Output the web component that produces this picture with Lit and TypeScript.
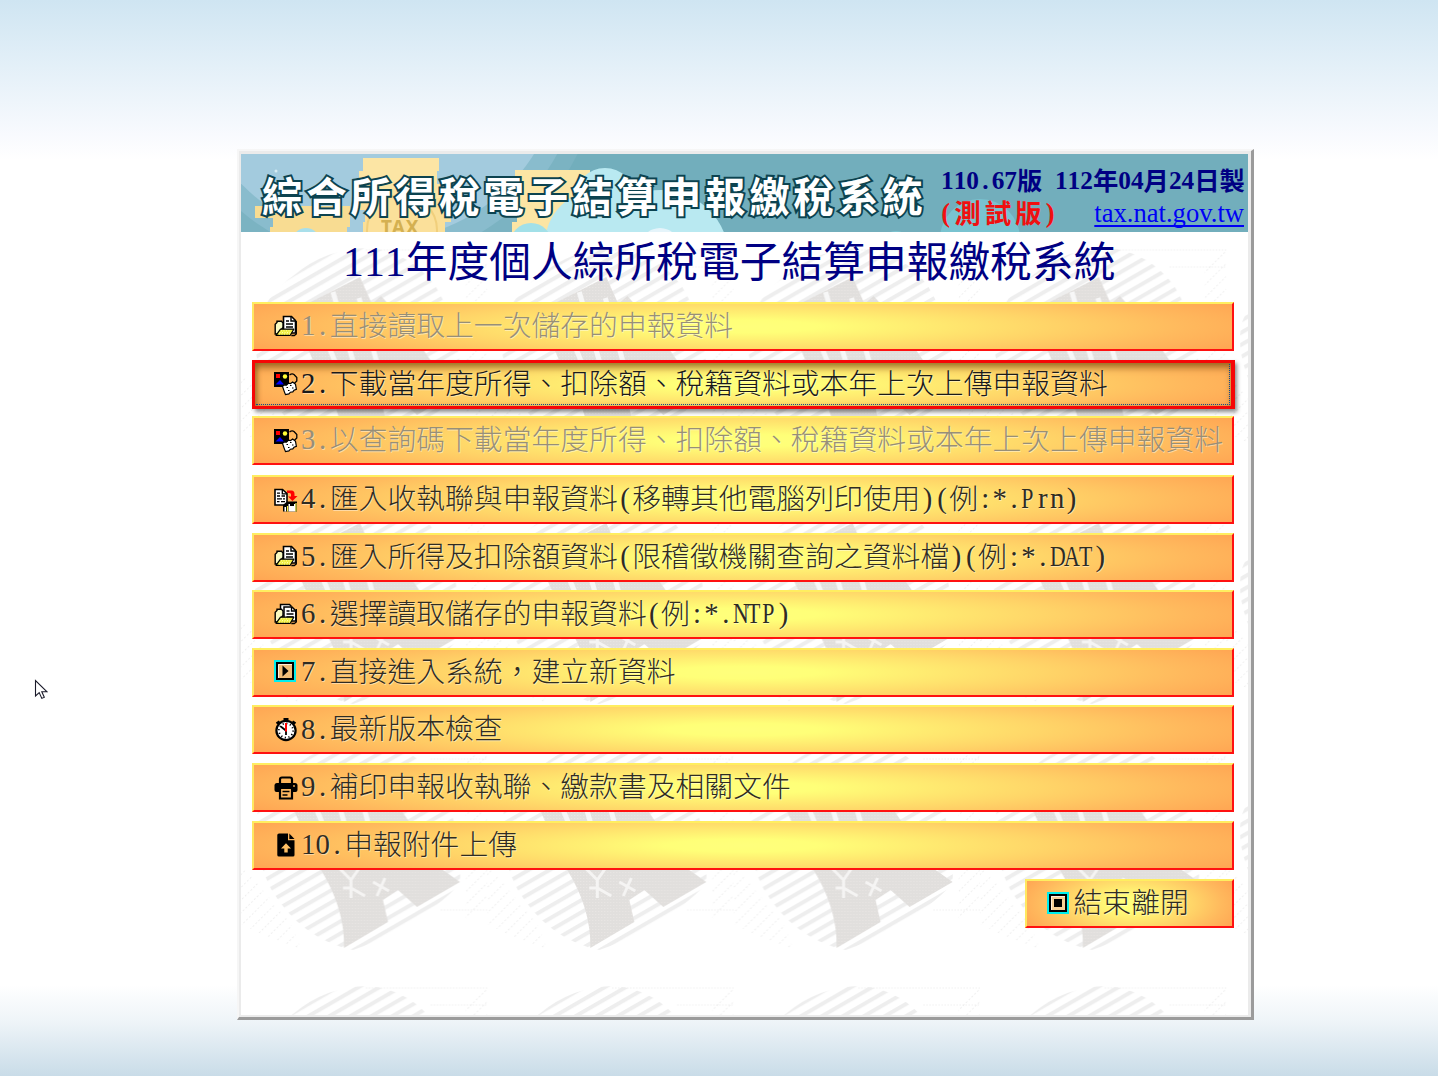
import { LitElement, html, css, svg } from "lit";
import { customElement, property } from "lit/decorators.js";
import { classMap } from "lit/directives/class-map.js";

const sheet = svg`
  <path d="M9.5 1.5h8l4 4V18h-12z" fill="#fff" stroke="#000" stroke-width="1.6"/>
  <path d="M17 1.5V6h4.5" fill="none" stroke="#000" stroke-width="1.4"/>
  <path d="M12 6h3M12 9h7M12 12h7M12 15h7" stroke="#000" stroke-width="1.3"/>`;

const folder = svg`
  <path d="M1.2 19V9.2L3 7.5V6.2h4.5l1.5 2v4.3L4 19z" fill="#fbfbc0" stroke="#000" stroke-width="1.4"/>
  <path d="M2 20.3 6.5 14.2h13.3L16.3 20.3z" fill="#f0ee3c" stroke="#000" stroke-width="1.2" stroke-linejoin="round"/>
  <path d="M5.5 17.5h11M7 15.8h10M5 19h11" stroke="#fffdb0" stroke-dasharray="1 1.5"/>
  <path d="M22.3 6v13l-2 1.5h-3" fill="none" stroke="#000" stroke-width="1.3"/>`;

const icons: Record<string, unknown> = {
  folder: svg`${sheet}${folder}`,
  folders: svg`
    <path d="M6.5 14V1.5h9l2 2" fill="#fff" stroke="#000" stroke-width="1.5"/>
    <path d="M10 4h8l3.8 3.8V18H10z" fill="#fff" stroke="#000" stroke-width="1.5"/>
    <path d="M17.5 4v4H22M12.5 8h3M12.5 11h7M12.5 14h7" fill="none" stroke="#000" stroke-width="1.3"/>
    ${folder}`,
  shapes: svg`
    <path d="M0 0h15v15H0z" fill="#000"/>
    <path d="M2 2h4v4H2z" fill="#f00"/>
    <circle cx="11" cy="4.5" r="2.200" fill="#ff3"/>
    <path d="M1.500 12.500 6 8l4 4.500z" fill="#00f"/>
    <path d="M15.500 3q2.500-1.800 4.500-.5l2.800 3v3.500l-2.500 2.500" fill="none" stroke="#000" stroke-width="1.3"/>
    <path d="m8.500 14.500 1.700-1.700 2.300.4 2-2 2 .3 2.200-1.500 2.800 2.300.9 5-2.400 1-1.200 1.600-2.400.3-1.500 1.700-3.400.7-1.200-3z" fill="#fff" stroke="#000" stroke-width="1.2"/>
    <path d="M12.500 15.500h1.500M16 13.500h1.500M14 18.500h1.500M18 16h1.500" stroke="#000" stroke-width="1.2"/>`,
  transfer: svg`
    <path d="M1 1.5h7.5l4.5 4V17H1z" fill="#fff" stroke="#000" stroke-width="1.6"/>
    <path d="M8.3 1.5v4.3H13M3 5.2h3M3 8h3m1.5 0H11M3 10.8h5m1 0h2M3 13.7h2.5m1.5 0h4" fill="none" stroke="#000" stroke-width="1.3"/>
    <path d="M9 23.500V17l4-3.500h10v10z" fill="#000"/>
    <path d="M14.500 16h7v7.500h-7zM10.500 19h1.500v4.500h-1.500z" fill="#fff"/>
    <path d="M13.500 18v5.500M22 15v8.500" fill="none" stroke="#f6ee45" stroke-width="1.2"/>
    <path d="M16 15h4v3h-4z" fill="#000"/>
    <path d="M13 5V2.500h4.500q3 0 3 3.500v2H23.500L18.500 13 14 8.500h3V6.500q0-1.500-1.500-1.500z" fill="#f00"/>`,
  play: svg`
    <path d="M1 1h20v20H1z" fill="#f1bd79" stroke="#0ee" stroke-width="2"/>
    <path d="M3 3h16v16H3z" fill="none" stroke="#000" stroke-width="2"/>
    <path d="M4.5 18V4.5H18" fill="none" stroke="#fff0dc"/><path d="M8.5 5.500v11l6-5.500z" fill="#000"/>`,
  stop: svg`
    <path d="M1 1h20v20H1z" fill="#f5d098" stroke="#0ee" stroke-width="2"/>
    <path d="M3 3h16v16H3z" fill="none" stroke="#000" stroke-width="2"/>
    <path d="M4.5 18V4.5H18" fill="none" stroke="#fff0dc"/><path d="M7 7h8v8H7z" fill="#000"/>`,
  clock: svg`
    <path d="M9.5 1.2h5M12 1v4M2.5 5.5l3-2.2M21.5 5.500l-3-2.2M4 4.5l2 2.3M20 4.500l-2 2.3" stroke="#000" stroke-width="2.2"/>
    <circle cx="12" cy="12.500" r="9.600" fill="#fff" stroke="#000" stroke-width="2.2"/>
    <circle cx="12" cy="12.500" r="7.100" fill="none" stroke="#000" stroke-width="1.8" stroke-dasharray="1.200 2.520"/>
    <path d="M12 12.500V17M6.8 8.500l5 4" stroke="#000" stroke-width="1.8"/>
    <path d="M12 5V13.500" stroke="#f00" stroke-width="2"/>`,
  printer: svg`
    <path d="M6 7V3.500q0-2 2-2h8q2 0 2 2V7" fill="none" stroke="#000" stroke-width="2.200"/>
    <path d="M3 7h18q2.5 0 2.5 2.500v4.500q0 2-2 2h-19q-2 0-2-2V9.500Q.5 7 3 7z" fill="#000"/>
    <path d="M6 12h12v10.500H6z" fill="#ffb860" stroke="#000" stroke-width="2.200"/>
    <path d="M8.5 15.500h7M8.5 19h5" stroke="#000" stroke-width="1.6"/>
    <circle cx="20" cy="10" r=".9" fill="#ffb860"/>`,
  upload: svg`
    <path d="M5 .5h9v6.7h6.5V22q0 1.5-1.5 1.5H5Q3.300 23.5 3.300 22V2Q3.300.5 5 .5z" fill="#000"/>
    <path d="M15.300.5 20.5 5.900h-5.200z" fill="#000"/>
    <path d="m12 10.200 5 5.300h-3.300v4h-3.400v-4H7z" fill="#ffc065"/>`,
};

const HALF = /[\x21-\x7e]/;

/** Sets Latin characters in half-em cells so that they align with full-width glyphs. */
function grid(text: string) {
  return [...text].map((c) =>
    c === " "
      ? html`<span class="cell">&nbsp;</span>`
      : HALF.test(c)
        ? html`<span class=${classMap({ cell: true, cap: /[A-Z]/.test(c) })}>${c}</span>`
        : c,
  );
}

const gridStyles = css`
  .cell {
    display: inline-block;
    width: 0.5em;
    line-height: 1;
    vertical-align: 0.03em;
    text-align: center;
    font-family: "Liberation Serif", serif;
    white-space: pre;
  }
  .cap {
    transform: scaleX(0.76);
    text-indent: -0.08em;
  }
`;

@customElement("menu-button")
class MenuButton extends LitElement {
  @property() icon = "";
  @property() label = "";
  @property({ type: Boolean }) disabled = false;
  @property({ type: Boolean }) selected = false;

  static styles = [
    gridStyles,
    css`
      :host {
        display: block;
        height: 49px;
      }
      .button {
        box-sizing: border-box;
        width: 100%;
        height: 100%;
        display: flex;
        align-items: center;
        gap: 3px;
        margin: 0;
        padding: 0 0 2px 20px;
        border: 2px solid;
        border-color: #ffee60 #f11 #f11 #ffe860;
        background: radial-gradient(ellipse 55% 100% at 50% 50%, #ffff7c 0%, #ffff78 14%, #ffd568 56%, #ffb95d 82%, #ffa050 110%);
        font: 300 28.8px/44px "Noto Sans CJK TC", sans-serif;
        color: #2f2c22;
        text-shadow: 1px 1px 0 rgba(255, 255, 255, 0.45);
        white-space: nowrap;
        text-align: left;
      }
      .label {
        margin-top: -3px;
      }
      .disabled {
        color: #978f78;
      }
      .selected {
        position: relative;
        border-width: 3px;
        border-color: #f60606;
        padding-left: 19px;
        color: #1a1a1a;
        box-shadow: 1px 0 0 #f60606, 3px 3px 4px rgba(0, 0, 0, 0.45), inset 0 5px 6px rgba(90, 60, 0, 0.5), inset 3px 0 4px rgba(90, 60, 0, 0.3);
      }
      .selected::after {
        content: "";
        position: absolute;
        inset: 1px;
        border-right: 1px dotted #124a90;
        border-bottom: 1px dotted #124a90;
      }
      .icon {
        width: 24px;
        height: 24px;
        margin-top: 2px;
        flex: none;
      }
    `,
  ];

  render() {
    return html`<button
      class=${classMap({ button: true, disabled: this.disabled, selected: this.selected })}
      ?aria-disabled=${this.disabled}
    ><svg class="icon" viewBox="0 0 24 24">${icons[this.icon]}</svg><span class="label">${grid(this.label)}</span></button>`;
  }
}

@customElement("banner-art")
class BannerArt extends LitElement {
  static styles = css`
    :host {
      display: block;
    }
    .art {
      display: block;
      width: 1007px;
      height: 78px;
    }
    .tax {
      font: 700 19px "Noto Sans", sans-serif;
      letter-spacing: 1px;
    }
  `;
  render() {
    return html`<svg class="art" viewBox="0 0 1007 78">
      <rect width="1007" height="78" fill="#72aebc" />
      <circle cx="135" cy="-100" r="225" fill="#7bb3c2" />
      <circle cx="135" cy="-100" r="207" fill="#89bccd" />
      <circle cx="135" cy="-100" r="187" fill="#a3cbde" />
      <g fill="#fce5a4">
        <path d="M122 4h76v13h-76zM118 17h78v13h-78zM122 30h82v14h-82z" />
        <path d="M14 52h95v12H14zM32 64h77v9H32zM29 73h77v5H29z" fill="#f8dc92" />
        <path d="M274 16h75v14h-75zM278 30h72v14h-72zM270 44h80v14h-80zM276 58h70v10h-70zM271 68h80v10h-80z" />
        <path d="M118 44h86v12h-86zM124 56h86v12h-86zM122 68h82v10h-82z" fill="#fadf98" />
      </g>
      <circle cx="161" cy="76" r="35" fill="#fbe09a" stroke="#f1cf7c" stroke-width="2" />
      <text class="tax" x="140" y="80" fill="#d4b051">TAX</text>
      <circle cx="65" cy="88" r="14" fill="#a9dfea" />
      <g fill="#b9e9f1">
        <circle cx="364" cy="44" r="30" />
        <circle cx="358" cy="90" r="54" />
        <circle cx="420" cy="104" r="68" />
      </g>
      <circle cx="290" cy="90" r="21" fill="#a2e0e8" />
      <circle cx="419" cy="94" r="20" fill="#e5f4fa" />
      <circle cx="739" cy="85" r="40" fill="#79c3d0" />
      <circle cx="655" cy="93" r="16" fill="#7cc3cf" />
      <circle cx="35" cy="17" r="1.5" fill="#d5ebf3" />
    </svg>`;
  }
}

@customElement("watermark-art")
class WatermarkArt extends LitElement {
  static styles = css`
    :host {
      display: block;
    }
    .art {
      display: block;
      width: 100%;
      height: 100%;
    }
  `;
  render() {
    return html`<svg class="art">
      <defs>
        <pattern id="stripes" width="20" height="10.5" patternUnits="userSpaceOnUse" patternTransform="rotate(-30)">
          <rect width="20" height="4" fill="#eeeeee" />
        </pattern>
        <pattern id="faint" width="4" height="9" patternUnits="userSpaceOnUse" patternTransform="rotate(-45)">
          <rect width="2" height="1" fill="#efefef" />
        </pattern>
        <pattern id="weave" width="3" height="3" patternUnits="userSpaceOnUse">
          <rect width="3" height="3" fill="#e1dfdd" />
          <rect width="1" height="1" fill="#eae7e5" />
        </pattern>
        <pattern id="tile" width="246.3" height="246" patternUnits="userSpaceOnUse" y="10">
          <path d="M0 130 50 190 60 215 30 205 0 190zM225 20 246 0V170L225 190z" fill="url(#faint)" />
          <path d="M125 8H246M190 25H246M200 176H246" stroke="#e8e8e8" stroke-dasharray="1 2" />
          <path d="M52 34Q85 6 128 6Q170 10 195 45Q222 90 219 150Q175 195 112 216Q60 205 30 155Q8 110 16 80Q28 50 52 34z" fill="url(#stripes)" />
          <path d="M50 70 119 35 131 62 140 54 160 76 202 136 219 148 176 173 157 156 142 166 147 188 103 214Q104 175 80 136z" fill="url(#weave)" />
          <path d="m98 134 12 12 9-13m-9 13v18m-8-10h8l14 8m8-14 16 9m-12 5 8-18" fill="none" stroke="#f5f4f3" stroke-width="3" />
          <path d="m70 62 25 60M92 50l22 76M118 56l18 65" stroke="#f7f7f7" stroke-width="5" />
        </pattern>
      </defs>
      <rect width="100%" height="100%" fill="url(#tile)" />
    </svg>`;
  }
}

interface Item {
  icon: string;
  label: string;
  disabled?: boolean;
  selected?: boolean;
}

const items: Item[] = [
  { icon: "folder", label: "1.直接讀取上一次儲存的申報資料", disabled: true },
  { icon: "shapes", label: "2.下載當年度所得、扣除額、稅籍資料或本年上次上傳申報資料", selected: true },
  { icon: "shapes", label: "3.以查詢碼下載當年度所得、扣除額、稅籍資料或本年上次上傳申報資料", disabled: true },
  { icon: "transfer", label: "4.匯入收執聯與申報資料(移轉其他電腦列印使用)(例:*.Prn)" },
  { icon: "folder", label: "5.匯入所得及扣除額資料(限稽徵機關查詢之資料檔)(例:*.DAT)" },
  { icon: "folders", label: "6.選擇讀取儲存的申報資料(例:*.NTP)" },
  { icon: "play", label: "7.直接進入系統，建立新資料" },
  { icon: "clock", label: "8.最新版本檢查" },
  { icon: "printer", label: "9.補印申報收執聯、繳款書及相關文件" },
  { icon: "upload", label: "10.申報附件上傳" },
];

@customElement("app-root")
class AppRoot extends LitElement {
  static styles = [
    gridStyles,
    css`
      :host {
        display: block;
        box-sizing: border-box;
        position: relative;
        width: 1438px;
        height: 1076px;
        overflow: hidden;
        padding: 149px 0 0 237px;
        background: linear-gradient(#cfe5f2 0, #e0eef7 55px, #f8fafe 135px, #fff 160px, #fff 985px, #eef4f8 1022px, #c9dce8 1076px);
        font-family: "Noto Sans CJK TC", sans-serif;
      }
      .window {
        box-sizing: border-box;
        width: 1017px;
        height: 871px;
        border: solid;
        border-width: 2px 3px 3px 2px;
        border-color: #f6f6f6 #9b9b9b #9b9b9b #f6f6f6;
        background: #fff;
      }
      .frame {
        box-sizing: border-box;
        height: 866px;
        display: flex;
        flex-direction: column;
        border: solid #ebebeb;
        border-width: 3px 3px 2px 2px;
      }
      .banner {
        position: relative;
        height: 78px;
        flex: none;
        display: flex;
      }
      .banner-bg {
        position: absolute;
        inset: 0;
      }
      .brand {
        position: relative;
        box-sizing: border-box;
        width: 700px;
        padding-left: 21px;
        font-size: 40.5px;
        line-height: 82px;
        font-weight: 700;
        letter-spacing: 3.8px;
        color: #fff;
        -webkit-text-stroke: 4px #0c4350;
        paint-order: stroke fill;
        white-space: nowrap;
      }
      .info {
        position: relative;
        display: flex;
        flex-direction: column;
        width: 304px;
        padding-top: 9px;
        font-weight: 700;
        white-space: nowrap;
      }
      .version {
        font-size: 25.33px;
        line-height: 32px;
        height: 32px;
        color: #000083;
      }
      .line {
        display: flex;
        justify-content: space-between;
        align-items: flex-start;
      }
      .trial {
        font-size: 26.5px;
        line-height: 34px;
        height: 34px;
        letter-spacing: 3.9px;
        color: #f01010;
      }
      .link {
        font: 400 26.6px/36px "Liberation Serif", serif;
        margin-right: 1px;
        color: #0000f5;
        text-decoration: underline;
        text-decoration-thickness: 2px;
        text-underline-offset: 3px;
        text-decoration-skip-ink: none;
      }
      .body {
        position: relative;
        flex: 1;
      }
      .watermark {
        position: absolute;
        inset: 0;
      }
      .content {
        position: relative;
        display: flex;
        flex-direction: column;
        padding: 0 14.5px 0 11px;
      }
      .title {
        margin: 0 0 0 91px;
        height: 70.3px;
        font-size: 41.75px;
        line-height: 54px;
        font-weight: 400;
        color: #000083;
        white-space: nowrap;
      }
      .list {
        display: flex;
        flex-direction: column;
        gap: 8.6px;
      }
      .raised {
        margin: -1.3px 0 1.3px;
      }
      .exit {
        align-self: flex-end;
        width: 209px;
        margin-top: 9.7px;
      }
      .pointer {
        position: absolute;
        left: 34px;
        top: 679px;
        width: 14px;
        height: 22px;
      }
    `,
  ];

  render() {
    return html`
      <main class="window" lang="zh-Hant">
        <div class="frame">
          <header class="banner">
            <banner-art class="banner-bg"></banner-art>
            <div class="brand">綜合所得稅電子結算申報繳稅系統</div>
            <div class="info">
              <div class="version">${grid("110.67版 112年04月24日製")}</div>
              <div class="line">
                <span class="trial">${grid("(測試版)")}</span>
                <a class="link">tax.nat.gov.tw</a>
              </div>
            </div>
          </header>
          <section class="body">
            <watermark-art class="watermark"></watermark-art>
            <div class="content">
              <h1 class="title">${grid("111年度個人綜所稅電子結算申報繳稅系統")}</h1>
              <nav class="list">
                ${items.map(
                  (it, i) => html`<menu-button
                    class=${classMap({ raised: i === 2 })}
                    .icon=${it.icon}
                    .label=${it.label}
                    .disabled=${!!it.disabled}
                    .selected=${!!it.selected}
                  ></menu-button>`,
                )}
              </nav>
              <menu-button class="exit" .icon=${"stop"} .label=${"結束離開"}></menu-button>
            </div>
          </section>
        </div>
      </main>
      <svg class="pointer" viewBox="0 0 14 22">
        <path d="M1.5 1.5V17l3.7-3.4 2.6 5.8 2.5-1.1-2.5-5.6h5z" fill="#fff" stroke="#1a1a2a" stroke-width="1.1" />
      </svg>
    `;
  }
}
